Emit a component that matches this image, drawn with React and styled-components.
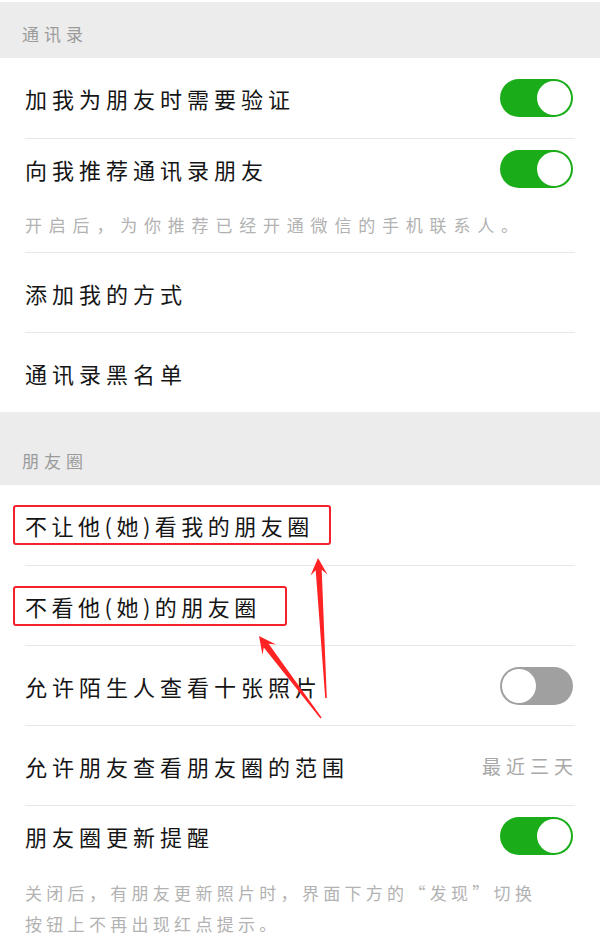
import React from "react";
import styled, { createGlobalStyle, css } from "styled-components";

const GlobalStyle = createGlobalStyle`
  body {
    margin: 0;
    background: #fff;
    font-family: "Noto Sans CJK SC", "Noto Sans", sans-serif;
  }
`;

const arrowPoints = (tx, ty, hx, hy) => {
  const dx = hx - tx;
  const dy = hy - ty;
  const len = Math.hypot(dx, dy);
  const ux = dx / len;
  const uy = dy / len;
  const nx = -uy;
  const ny = ux;
  const head = 17;
  const hw = 8.5;
  const neck = 12;
  const sw = 3;
  const tw = 0.8;
  const bx = hx - ux * head;
  const by = hy - uy * head;
  const kx = hx - ux * neck;
  const ky = hy - uy * neck;
  return [
    [hx, hy],
    [bx + nx * hw, by + ny * hw],
    [kx + nx * sw, ky + ny * sw],
    [tx + nx * tw, ty + ny * tw],
    [tx - nx * tw, ty - ny * tw],
    [kx - nx * sw, ky - ny * sw],
    [bx - nx * hw, by - ny * hw],
  ]
    .map((p) => p.map((v) => v.toFixed(1)).join(","))
    .join(" ");
};

const App = () => {
  return (
    <Page>
      <GlobalStyle />
      <SectionTitle $h={56}>通讯录</SectionTitle>
      <Row $first>
        <Label>加我为朋友时需要验证</Label>
        <Switch $on />
      </Row>
      <Row $short>
        <Label>向我推荐通讯录朋友</Label>
        <Switch $on />
      </Row>
      <Hint $pad="10px 0 12px" $spacing="6.8px">
        开启后，为你推荐已经开通微信的手机联系人。
      </Hint>
      <Row>
        <Label>添加我的方式</Label>
      </Row>
      <Row>
        <Label>通讯录黑名单</Label>
      </Row>

      <SectionTitle $h={73}>朋友圈</SectionTitle>
      <Row $first>
        <Label $marked $padRight={15}>
          不让他(她)看我的朋友圈
        </Label>
      </Row>
      <Row>
        <Label $marked $padRight={24}>
          不看他(她)的朋友圈
        </Label>
      </Row>
      <Row>
        <Label>允许陌生人查看十张照片</Label>
        <Switch />
      </Row>
      <Row>
        <Label>允许朋友查看朋友圈的范围</Label>
        <Value>最近三天</Value>
      </Row>
      <Row $short>
        <Label>朋友圈更新提醒</Label>
        <Switch $on />
      </Row>
      <Hint $pad="11px 0 12px" $spacing="4.3px">
        关闭后，有朋友更新照片时，界面下方的“发现”切换
        <br />
        按钮上不再出现红点提示。
      </Hint>

      <Arrows viewBox="0 0 600 951">
        <polygon points={arrowPoints(326, 698, 318, 558)} />
        <polygon points={arrowPoints(321, 718, 259, 636)} />
      </Arrows>
    </Page>
  );
};

export default App;

const Page = styled.div`
  position: relative;
  width: 600px;
  height: 951px;
  padding-top: 2px;
  box-sizing: border-box;
  background: #fff;
  overflow: hidden;
`;

const SectionTitle = styled.div`
  height: ${(p) => p.$h}px;
  background: #ececec;
  display: flex;
  align-items: flex-end;
  padding: 0 0 14px 22px;
  box-sizing: border-box;
  font-size: 17px;
  line-height: 20px;
  letter-spacing: 5px;
  color: #9b9b9b;
`;

const Row = styled.div`
  height: ${(p) => (p.$short ? 61 : 80)}px;
  box-sizing: border-box;
  margin: 0 25px;
  display: flex;
  align-items: center;
  justify-content: space-between;
  border-top: ${(p) => (p.$first ? "none" : "1px solid #e8e8e8")};
`;

const Label = styled.span`
  font-size: 22px;
  line-height: 30px;
  letter-spacing: 5px;
  color: #151515;
  white-space: nowrap;

  ${(p) =>
    p.$marked &&
    css`
      margin-left: -12px;
      padding: 3px ${p.$padRight}px 3px 10px;
      border: 2px solid #f5222d;
      border-radius: 3px;
      letter-spacing: 4.5px;
    `}
`;

const Value = styled.span`
  font-size: 19px;
  letter-spacing: 5px;
  color: #a8a8a8;
  margin-right: -3px;
`;

const Switch = styled.span`
  position: relative;
  flex-shrink: 0;
  width: 73px;
  height: 38px;
  margin-right: 2px;
  border-radius: 19px;
  background: ${(p) => (p.$on ? "#1aad19" : "#a0a0a0")};

  &::after {
    content: "";
    position: absolute;
    top: 2px;
    ${(p) => (p.$on ? "right: 2px;" : "left: 2px;")}
    width: 34px;
    height: 34px;
    border-radius: 50%;
    background: #fff;
  }
`;

const Hint = styled.div`
  margin: 0 25px;
  padding: ${(p) => p.$pad};
  font-size: 17px;
  line-height: 31px;
  letter-spacing: ${(p) => p.$spacing};
  color: #b2b2b2;
  white-space: nowrap;
`;

const Arrows = styled.svg`
  position: absolute;
  top: 0;
  left: 0;
  width: 600px;
  height: 951px;
  pointer-events: none;
  fill: #ff2323;
`;
